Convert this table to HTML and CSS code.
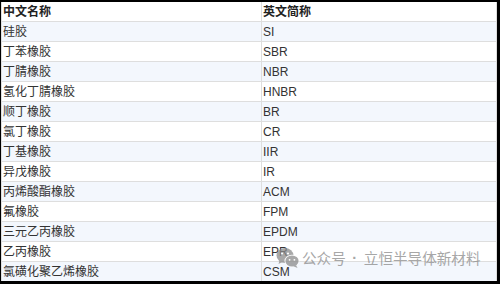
FILE: index.html
```html
<!DOCTYPE html>
<html lang="zh">
<head>
<meta charset="utf-8">
<link rel="stylesheet" href="styles.css">
</head>
<body>
<div class="frame">
  <table class="grid">
    <thead>
      <tr><th>中文名称</th><th>英文简称</th></tr>
    </thead>
    <tbody>
      <tr><td>硅胶</td><td>SI</td></tr>
      <tr><td>丁苯橡胶</td><td>SBR</td></tr>
      <tr><td>丁腈橡胶</td><td>NBR</td></tr>
      <tr><td>氢化丁腈橡胶</td><td>HNBR</td></tr>
      <tr><td>顺丁橡胶</td><td>BR</td></tr>
      <tr><td>氯丁橡胶</td><td>CR</td></tr>
      <tr><td>丁基橡胶</td><td>IIR</td></tr>
      <tr><td>异戊橡胶</td><td>IR</td></tr>
      <tr><td>丙烯酸酯橡胶</td><td>ACM</td></tr>
      <tr><td>氟橡胶</td><td>FPM</td></tr>
      <tr><td>三元乙丙橡胶</td><td>EPDM</td></tr>
      <tr><td>乙丙橡胶</td><td>EPR</td></tr>
      <tr><td>氯磺化聚乙烯橡胶</td><td>CSM</td></tr>
    </tbody>
  </table>
  <div class="watermark">
    <svg class="wx" viewBox="0 0 24 22" width="24" height="22">
      <ellipse cx="9" cy="8.5" rx="8.5" ry="7.5" fill="#8c8c8c"/>
      <path d="M3.5 13.5 L2.5 17 L6.5 15 Z" fill="#8c8c8c"/>
      <ellipse cx="16" cy="14" rx="7.5" ry="6.3" fill="#fff"/>
      <ellipse cx="16" cy="14" rx="6.6" ry="5.5" fill="#8c8c8c"/>
      <path d="M20 18 L21.5 21 L17.5 19.3 Z" fill="#8c8c8c"/>
      <circle cx="6" cy="6.5" r="1.1" fill="#fff"/>
      <circle cx="12" cy="6.5" r="1.1" fill="#fff"/>
      <circle cx="13.6" cy="12.8" r="0.9" fill="#fff"/>
      <circle cx="18.4" cy="12.8" r="0.9" fill="#fff"/>
    </svg>
    <span class="wm-text">公众号</span>
    <span class="wm-text wm-dot">·</span>
    <span class="wm-text">立恒半导体新材料</span>
  </div>
</div>
</body>
</html>
```
FILE: styles.css
```css
html, body {
  margin: 0;
  padding: 0;
  background: #000;
}
.frame {
  position: relative;
  width: 500px;
  height: 284px;
  box-sizing: border-box;
  border-style: solid;
  border-color: #000;
  border-width: 2px 3px 3px 1px;
  background: #fff;
  overflow: hidden;
}
.grid {
  width: 100%;
  border-collapse: collapse;
  font-family: "Liberation Sans", "Noto Sans CJK SC", sans-serif;
  font-size: 12px;
  color: #333;
}
.grid th, .grid td {
  height: 18px;
  padding: 1px 0 0 1px;
  text-align: left;
  border: 1px solid #dedede;
  border-top: none;
  line-height: 18px;
}
.grid th {
  font-weight: bold;
  color: #222;
  background: #fff;
}
.grid th:first-child, .grid td:first-child {
  width: 258px;
}
.grid tbody tr:nth-child(odd) td {
  background: #f3f7fd;
}
.grid tbody tr:nth-child(even) td {
  background: #fff;
}
.watermark {
  position: absolute;
  left: 275px;
  top: 245px;
  display: flex;
  align-items: center;
  gap: 1px;
  opacity: 0.75;
}
.wx {
  display: block;
  margin-right: 1px;
}
.wm-text {
  font-family: "Noto Sans CJK SC", sans-serif;
  font-size: 14.6px;
  line-height: 20px;
  color: #8a8a8a;
  white-space: nowrap;
}
.wm-dot {
  width: 16px;
  text-align: center;
  font-family: "Liberation Sans", sans-serif;
  font-weight: bold;
}
```
